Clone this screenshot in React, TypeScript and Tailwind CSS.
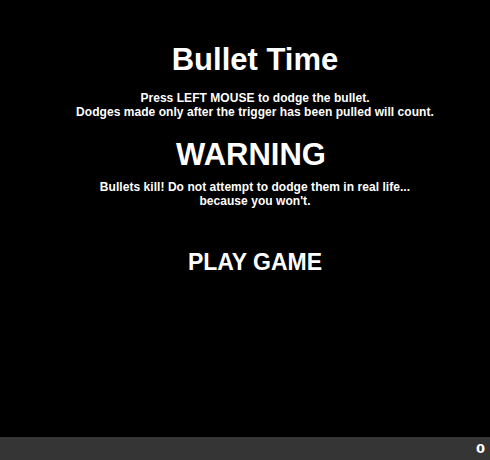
export default function App() {
  return (
    <div className="flex h-[460px] w-[490px] flex-col bg-black font-['Liberation_Sans',Arial,sans-serif] text-white">
      <main className="flex flex-1 flex-col items-center pl-[20px] pt-[40px] text-center">
        <h1 className="text-[31px] font-bold leading-[40px]">Bullet Time</h1>
        <p className="mt-[11px] text-[12px] font-bold leading-[14px] tracking-[0.05px]">
          Press LEFT MOUSE to dodge the bullet.
          <br />
          Dodges made only after the trigger has been pulled will count.
        </p>

        <h2 className="mt-[16px] -ml-[8px] text-[31px] font-bold leading-[40px]">WARNING</h2>
        <p className="mt-[5px] text-[12px] font-bold leading-[14px] tracking-[0.05px]">
          Bullets kill! Do not attempt to dodge them in real life...
          <br />
          because you won't.
        </p>

        <button className="mt-[41px] text-[23px] font-bold leading-[26px]">PLAY GAME</button>
      </main>

      <footer className="flex h-[23px] items-center justify-end bg-[#353535] pr-[5px]">
        <span className="font-['DejaVu_Sans',sans-serif] text-[13px] font-bold">0</span>
      </footer>
    </div>
  );
}
